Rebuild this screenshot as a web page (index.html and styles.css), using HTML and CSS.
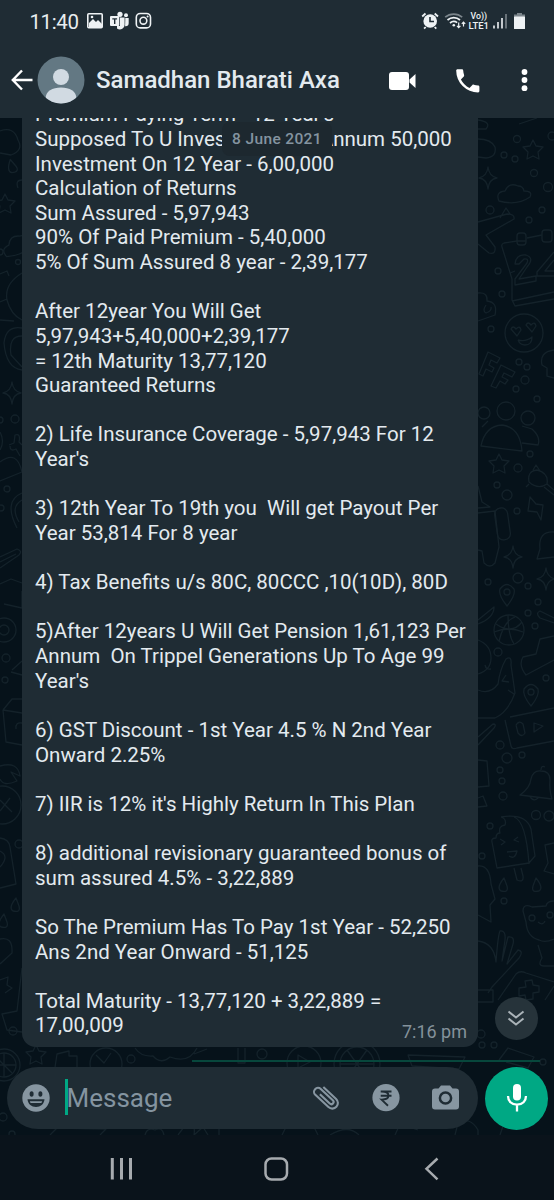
FILE: index.html
```html
<!DOCTYPE html>
<html lang="en">
<head>
<meta charset="utf-8">
<title>Samadhan Bharati Axa</title>
<link rel="stylesheet" href="styles.css">
</head>
<body>
<div class="phone">
  <header class="top">
    <div class="status">
      <span class="clock">11:40</span>
      <svg class="status-left" width="68" height="20" viewBox="86 10 68 20">
        <rect x="87.8" y="13.8" width="14.4" height="14" rx="1" fill="none" stroke="#eef2f4" stroke-width="1.6"/>
        <path d="M89 26v-3l4-4 3 3 2-2 4 4v3H89z" fill="#eef2f4"/><circle cx="92" cy="17" r="1.3" fill="#eef2f4"/>
        <g fill="#eef2f4"><circle cx="120" cy="14.3" r="2.6"/><circle cx="126" cy="15.3" r="2"/><path d="M120 17.5h4.6v6.5a4.8 4.8 0 0 1-7.6 4.5V26h3z"/><path d="M125.3 18h3.4v5a3.3 3.3 0 0 1-3.6 3.2z"/><rect x="110" y="16" width="9.3" height="10" rx="1"/></g>
        <path d="M112.3 18.9h4.8M114.7 18.9v5" stroke="#1f2c34" stroke-width="1.4"/>
        <rect x="136.3" y="13.5" width="14.2" height="14.4" rx="4" fill="none" stroke="#eef2f4" stroke-width="1.6"/>
        <circle cx="143.4" cy="20.7" r="3.4" fill="none" stroke="#eef2f4" stroke-width="1.6"/><circle cx="147.6" cy="16.4" r="1" fill="#eef2f4"/>
      </svg>
      <svg class="status-right" width="110" height="22" viewBox="418 9 110 22">
        <circle cx="430.2" cy="21" r="6.8" fill="#eef2f4"/>
        <path d="M422.2 16.5l3.3-3M438 16.5l-3.3-3M425.7 27l-1.6 1.7M434.7 27l1.6 1.7" stroke="#eef2f4" stroke-width="1.8"/>
        <path d="M430 17v4.5h4" stroke="#1f2c34" stroke-width="1.6" fill="none"/>
        <g fill="none" stroke-width="1.7"><path d="M445.2 17.2a13 13 0 0 1 17 0" stroke="#7b858b"/><path d="M447.5 20a9.5 9.5 0 0 1 12.5 0M450 23a6 6 0 0 1 7.2-.4" stroke="#eef2f4"/></g>
        <circle cx="453.8" cy="25.2" r="1.3" fill="#eef2f4"/>
        <path d="M458.7 22.5v5M457 25.8l1.7 1.8 1.7-1.8M463.5 26.6v-4.4M461.8 23.8l1.7-1.8 1.7 1.8" stroke="#eef2f4" stroke-width="1.2" fill="none"/>
        <text x="470.5" y="19.4" class="lte" textLength="16.5" lengthAdjust="spacingAndGlyphs">Vo))</text>
        <text x="468.5" y="28.6" class="lte" textLength="20.5" lengthAdjust="spacingAndGlyphs">LTE1</text>
        <path d="M494 28.5v-3M498 28.5v-6.5M502 28.5v-10.5" stroke="#eef2f4" stroke-width="1.6"/><path d="M506 28.5v-14.5" stroke="#7b858b" stroke-width="1.6"/>
        <rect x="517" y="13" width="5" height="2.5" fill="#7b858b"/><rect x="514" y="14.5" width="11" height="3" fill="#7b858b"/><rect x="514" y="16.5" width="11" height="12.6" rx=".6" fill="#eef2f4"/>
      </svg>
    </div>
    <div class="bar">
      <svg class="back" width="22" height="22" viewBox="0 0 22 22"><path d="M21.5 11H2.5M11 1.5L1.8 11l9.2 9.5" fill="none" stroke="#fff" stroke-width="2.4"/></svg>
      <svg class="avatar" width="48" height="48" viewBox="0 0 48 48"><defs><clipPath id="face"><circle cx="24" cy="24" r="23.5"/></clipPath></defs><circle cx="24" cy="24" r="23.5" fill="#637883"/><g clip-path="url(#face)" fill="#d1dae2"><circle cx="24" cy="21" r="8"/><path d="M8.5 43c0-8 7-11.5 15.500-11.500S39.500 35 39.500 43v5h-31z"/></g></svg>
      <h1 class="name">Samadhan Bharati Axa</h1>
      <svg class="actions" width="144" height="30" viewBox="386 65 144 30" fill="#fff">
        <rect x="389" y="72" width="20" height="18" rx="3"/><path d="M409.500 79.500l6-5.500v14l-6-5.500z"/>
        <path d="M457.500 69.300h4.300c.8 0 1.300.5 1.400 1.300.1 1.600.4 3.100.9 4.500.2.500 0 1-.3 1.400l-2.900 2.900a20 20 0 0 0 8.600 8.500l2.900-2.900c.4-.4.900-.5 1.400-.3 1.400.5 2.900.8 4.400.9.700 0 1.200.6 1.200 1.300v4.200c0 .8-.6 1.400-1.300 1.400A22 22 0 0 1 456.200 70.600c0-.7.6-1.300 1.300-1.300z"/>
        <circle cx="524.500" cy="72" r="2.900"/><circle cx="524.500" cy="80" r="2.900"/><circle cx="524.500" cy="88.200" r="2.900"/>
      </svg>
    </div>
  </header>

  <main class="chat">
    <svg class="wallpaper" width="554" height="1017" viewBox="0 118 554 1017">
      <defs>
        <path id="star" d="M0-10l3 6 7 1-5 5 1 7-6-3-6 3 1-7-5-5 7-1z"/>
        <path id="spark" d="M0-11q1 9 9 11q-8 1-9 11q-1-10-9-11q8-2 9-11z"/>
        <path id="cloud" d="M-15 8q-4-9 6-10q4-9 13-5q5 0 6 5q9 0 6 6q-13 9-31 4z"/>
        <path id="pin" d="M0 14q-9-11-7-17q7-9 14 0q2 6-7 17zM3 0a3 3 0 1 1-6 0a3 3 0 1 1 6 0"/>
        <path id="bell" d="M-16 8q10-7 11-16q2-9 10-8q9 0 9 9q-1 9 2 19zM-6 10q4 5 8 1M5-17q0-5 4-3"/>
        <path id="drop" d="M0-8q-8 10-3 13q8 2 6-5z"/>
        <g id="wheel"><circle r="16"/><circle r="12"/><path d="M0-12V12M-12 0H12M-8-8L8 8"/></g>
      </defs>
      <g class="doodles">
        <path d="M478 120q14 2 8 9h-8M519 124l18-6M478 139q13 0 17 8q2 10-9 11l-8-1"/>
        <circle cx="517" cy="139" r="3.500"/><circle cx="504" cy="155" r="3"/><circle cx="515" cy="159" r="3"/><circle cx="552" cy="136" r="4"/>
        <use href="#star" x="533" y="150"/><use href="#spark" x="488" y="178"/><circle cx="534" cy="173" r="3.500"/><circle cx="548" cy="187" r="4.500"/><use href="#cloud" x="514" y="193"/>
        <circle cx="490" cy="210" r="4"/><circle cx="542" cy="210" r="3"/><circle cx="529" cy="220" r="3"/>
        <path d="M478 222l29-8q8 0 7 5l-28 16l9 12q1 8-6 6l-11-9M500 218l6-10 4 6"/>
        <path d="M517 241l-13 2q-3 1-2 4l10 32v21l3 6 39-7M516 241h10M527 238l15-3M512 301l42-9M510 273l5-2"/><rect x="517" y="233" width="9" height="12" rx="3"/><rect x="542" y="230" width="10" height="12" rx="3"/>
        <path d="M515 264q1-10 11-9q9 3 1 12l-8 12 17-3v5l-21 4v-6l12-16q2-5-3-4l-5 5zM554 252l-17 20v4h17M554 260l-9 11h9"/>
        <circle cx="524" cy="333" r="19"/><path d="M517 336l-6-7q2-4 5 0q4-4 5 1zM532 332l-6-7q2-4 5 0q4-4 5 1zM518 340q8 2 14-3q0 8-7 8-5 0-7-5"/>
        <circle cx="498" cy="271" r="3"/><circle cx="502" cy="294" r="3"/><circle cx="491" cy="329" r="3"/><path d="M478 293q10-1 9 8q11 1 8 14l-17 6M486 305q-4 6 0 8q6-2 5-6"/>
        <path d="M488 352l12 6-3 5-6-3-2 5 5 3-2 4-6-3-3 7-4-2zM501 365l14 7-3 5-8-4-2 4 6 3-3 4-5-3-4 7-5-2z"/>
        <path d="M554 350q-15 2-12 15l5 3v8l7 2"/><circle cx="519" cy="362" r="3"/><circle cx="527" cy="367" r="3"/><circle cx="525" cy="380" r="4"/><circle cx="516" cy="389" r="3"/><circle cx="537" cy="399" r="3"/>
        <circle cx="484" cy="413" r="6"/><circle cx="506" cy="411" r="9"/><circle cx="528" cy="418" r="7"/><path d="M481 446q4-20 21-21 18 2 20 26zM522 426l10 3q9 8 6 16l-16-2M482 427l6-6"/>
        <use href="#star" x="499" y="464"/><circle cx="518" cy="468" r="4"/><circle cx="530" cy="454" r="3"/><circle cx="497" cy="485" r="3"/><circle cx="507" cy="495" r="5"/><circle cx="517" cy="511" r="3"/>
        <path d="M547 484q-9 6-18-2-2-11 8-12 12 3 10 14l7 6M544 487l10 8M533 470l3-5 4 6M529 484l-3 3M530 497l-2 14 9 1 4 8 2-15-7-1z"/>
        <rect x="496" y="508" width="13" height="32" rx="6" transform="rotate(-8 502 524)"/><path d="M478 513l17-2 4 36-4 16q-5 6-11 0l-2-12-4-1M478 486l4 16 8 5-12 1M554 532q-16-1-14 17l-3 10 17-2"/>
        <use href="#spark" x="513" y="557"/><use href="#spark" x="546" y="579"/><use href="#pin" x="507" y="592"/><circle cx="518" cy="578" r="5"/><circle cx="488" cy="582" r="3"/><circle cx="528" cy="586" r="3"/><circle cx="538" cy="602" r="3"/><circle cx="528" cy="613" r="3"/><circle cx="535" cy="626" r="3"/>
        <circle cx="509" cy="630" r="15"/><path d="M496 624q16 11 26-2M499 641q5-20 16-24M508 615q0 20 6 29M494 632q15-6 29 0M478 620l16-13q0 11-16 17M554 618l-14-7q-5 2 0 7l14 5"/>
        <path d="M478 640q13 5 13 18 0 12-13 16M478 690q12 5 20-6 2-15 8-25 6-4 5 6l4 28q-7 19-20 25h-17M554 660l-28 15q-8-10-3-18l13-3 4-15 14-3M485 665q1 5 6 4M506 675l-4 6 7 1M508 690l6 4"/>
        <circle cx="498" cy="652" r="4"/><circle cx="546" cy="678" r="3"/><use href="#pin" x="531" y="692"/><path d="M510 717l44-9M505 720l6 26q1 4 6 2l37-7M516 725l2 8q4 5 7 0l-2-9q-4-4-7 1M534 723v9l9-6z"/>
        <path d="M478 737l15-13q4 0 1 4l-16 17M478 760l9 1 2 25-11 1M478 798l5-2 4 10-9 1"/><circle cx="500" cy="745" r="4"/><circle cx="507" cy="758" r="5"/><circle cx="522" cy="755" r="3"/><circle cx="500" cy="770" r="3"/><circle cx="502" cy="781" r="3"/><circle cx="503" cy="796" r="4"/>
        <use href="#bell" x="536" y="787"/><circle cx="536" cy="815" r="4.500"/><circle cx="549" cy="816" r="5"/>
        <path d="M501 817q25-4 30 12l4 27-6 7-32 5-5-26q-1-4 4-4 0-5 4-5-2-7 5-8 2-6-4-8M514 817q12 4 15 47M514 868l3 12q7 3 6-4l-2-8M500 839l5 3-4 3M518 837l-4 3 5 2M507 852l10-1q-2 9-8 5"/>
        <circle cx="490" cy="826" r="3"/><circle cx="482" cy="856" r="3"/><use href="#drop" x="504" y="886"/><use href="#drop" x="536" y="886" transform="matrix(-1 0 0 1 1072 0)"/><circle cx="504" cy="901" r="3"/>
        <path d="M478 866q12-1 13 18l4 15-5 6 1 17-13-7M554 901q-7 0-8 5l-14 1q-9-4-9 4l3 11q1 15 13 18 6 3 15-1M538 945l4 13q-5 8 2 8h10"/><circle cx="532" cy="918" r="3"/><circle cx="550" cy="915" r="3"/><path d="M538 922q5 4 7-1M554 843l-9 2 3 18-4 8 10 3"/>
        <path d="M478 941q16 2 18 21 2-27 4-31 6-1 5 9l-3 21 6-24q7-1 5 7l-6 20 11-14q6 1 1 8l-27 29-4 6M478 990h15v12h-15M498 1000l18-26q4-4 10-1l28 9M519 988l7-1-1-6 7-1 1 5 6 1v6l-6 1v6l-7 1-1-5-6 1z"/>
        <circle cx="481" cy="1034" r="4"/><circle cx="494" cy="1045" r="3"/><circle cx="482" cy="1045" r="3"/><path d="M499 1060l9-12 26 9-6 11-22-6M545 1000l9-14"/><circle cx="543" cy="1062" r="3"/>

        <path d="M0 131q14-5 18 9 6 10-7 15l-11-2M22 180q-7 0-4 8"/><use href="#drop" x="13" y="167" transform="rotate(-20 13 167)"/><use href="#star" x="5" y="204"/><use href="#cloud" x="18" y="244" transform="rotate(-20 18 244)"/><circle cx="18" cy="262" r="2.500"/><circle cx="0" cy="252" r="3"/>
        <path d="M0 274l7-3 2 5M22 273q-18 11-15 27 4 15 15 20M0 302l7-3M0 320l14 1M22 328q-16-3-18 15 2 25 18 27M22 336q-14 0-11 19l11 12"/><use href="#spark" x="12" y="393"/><circle cx="15" cy="419" r="4"/><circle cx="0" cy="420" r="3"/><path d="M9 445l5-2 1-8q6-2 4 7l3 3M10 446q0 6 6 3l4 7M0 432q5 9 0 18M0 462q17-13 22 10l-22 9M22 493q-19 8-5 35M22 500q-12 7-3 22"/><circle cx="7" cy="489" r="3"/><circle cx="1" cy="508" r="3"/>
        <path d="M0 557l17-8q6 2 2 6l-19 13M0 562l16-8M0 584l11-5 11 4M22 591v17l-18-4"/><circle cx="4" cy="630" r="5"/><circle cx="4" cy="630" r="12"/><circle cx="6" cy="658" r="4"/><circle cx="5" cy="680" r="3"/><path d="M12 670l10-9M11 672l11 3M3 710l9-11h10M3 710l3 32 16 3M3 710l19 3M16 729q-1-7 6-6"/>
        <path d="M0 766q18-5 20 10l-9-4 6 9q-14 6-17-2"/><circle cx="2" cy="805" r="19"/><path d="M0 800l12 12M10 798L0 811M0 838q9 1 10 9l6 37-16 4M0 851q10 5 0 16"/><circle cx="19" cy="844" r="4"/><use href="#drop" x="16" y="906"/><use href="#drop" x="4" y="922"/><path d="M0 939q13-3 12 14l-12 11M22 968l-5 43-15 3 5 16 15 2M0 980l8-3-1 8 5 3-7 5"/><circle cx="13" cy="1031" r="4"/>
        <use href="#wheel" x="4" y="1065"/><use href="#star" x="36" y="1055"/><path d="M54 1074l3-20 12-3v5h8v18M135 1048q6 9 18 8 8 9 17 1 19 7 27-9M194 1054l13-5"/><circle cx="106" cy="1064" r="16"/><path d="M96 1055l8 8 7-10"/><circle cx="131" cy="1059" r="4"/><path d="M238 1048v15h7v-15"/><circle cx="262" cy="1054" r="5"/><circle cx="304" cy="1063" r="17"/><path d="M298 1055v13l12-6z"/><circle cx="357" cy="1064" r="23"/><circle cx="357" cy="1064" r="17"/><path d="M340 1064h34M347 1050l20 28M367 1050l-20 28M408 1055l57 2-6 12-47-3z"/>
        <circle cx="3" cy="1117" r="4"/><circle cx="12" cy="1134" r="3"/><path d="M50 1135l7-7 49 1-6 6M145 1135q2-8 10-5 7-4 9 5M178 1135l9-12q9-1 7 12l9-8 5 8M219 1135v-10M282 1135l4-8h28l4 8M330 1135q18-11 29 0M395 1135l5-11 18 6M455 1135l3-12q12-7 20 7v5M500 1135l4-12"/>
      </g>
    </svg>

    <div class="date">8 June 2021</div>

    <article class="bubble">
      <p class="text">Premium Paying Term - 12 Year's
Supposed To U Investment Per Annum 50,000
Investment On 12 Year - 6,00,000
Calculation of Returns
Sum Assured - 5,97,943
90% Of Paid Premium - 5,40,000
5% Of Sum Assured 8 year - 2,39,177

After 12year You Will Get
5,97,943+5,40,000+2,39,177
= 12th Maturity 13,77,120
Guaranteed Returns

2) Life Insurance Coverage - 5,97,943 For 12
Year's

3) 12th Year To 19th you  Will get Payout Per
Year 53,814 For 8 year

4) Tax Benefits u/s 80C, 80CCC ,10(10D), 80D

5)After 12years U Will Get Pension 1,61,123 Per
Annum  On Trippel Generations Up To Age 99
Year's

6) GST Discount - 1st Year 4.5 % N 2nd Year
Onward 2.25%

7) IIR is 12% it's Highly Return In This Plan

8) additional revisionary guaranteed bonus of
sum assured 4.5% - 3,22,889

So The Premium Has To Pay 1st Year - 52,250
Ans 2nd Year Onward - 51,125

Total Maturity - 13,77,120 + 3,22,889 =
17,00,009</p>
      <time class="time">7:16 pm</time>
    </article>

    <div class="jump"><svg width="20" height="20" viewBox="0 0 20 20"><path d="M2.500 3.500l7.500 6 7.500-6M2.500 10.500l7.500 6 7.500-6" fill="none" stroke="#aab3b8" stroke-width="2"/></svg></div>

    <div class="progress"></div>
    <footer class="composer">
      <div class="field">
        <svg class="smile" width="28" height="28" viewBox="0 0 28 28"><circle cx="14" cy="14" r="13.700" fill="#8796a1"/><g fill="#1f2c34"><ellipse cx="9.600" cy="10" rx="2" ry="2.800"/><ellipse cx="18.400" cy="10" rx="2" ry="2.800"/><path d="M5.500 15.300h17c-.5 5-4 7.700-8.500 7.700s-8-2.700-8.500-7.700z"/></g><path d="M7.800 17.200h12.400l-.8 1.800H8.600z" fill="#8796a1"/></svg>
        <span class="caret"></span>
        <span class="placeholder">Message</span>
        <svg class="tools" width="150" height="32" viewBox="310 1082 150 32">
          <path transform="translate(326.300 1097.700) rotate(-47)" d="M5.800-9.500V8a5.600 5.600 0 0 1-11.200 0V-10a4 4 0 0 1 8 0V6.500a2.200 2.200 0 0 1-4.500 0V-7" fill="none" stroke="#8796a1" stroke-width="2.100"/>
          <circle cx="386" cy="1097.700" r="13.600" fill="#8796a1"/><path d="M380.700 1091.500h10.800M380.700 1095.700h10.800M381.500 1091.500q7 0 7 4.100t-7 4l6.500 6.200" fill="none" stroke="#1f2c34" stroke-width="1.900"/>
          <path d="M435 1088.500h3.500l2.500-3h9l2.500 3h3.500q3 0 3 3v15q0 3-3 3h-21q-3 0-3-3v-15q0-3 3-3z" fill="#8796a1"/><circle cx="445.500" cy="1098" r="5.600" fill="none" stroke="#1f2c34" stroke-width="2.500"/>
        </svg>
      </div>
      <div class="mic"><svg width="22" height="30" viewBox="0 0 22 30"><rect x="7" y="1" width="8" height="16.500" rx="4" fill="#fff"/><path d="M2 13c0 5 3.500 8.700 9 8.700s9-3.700 9-8.700M11 21.500V28.500" fill="none" stroke="#fff" stroke-width="2.300"/></svg></div>
    </footer>
  </main>

  <nav class="nav">
    <svg width="554" height="65" viewBox="0 1135 554 65" fill="none" stroke="#a7abaf" stroke-width="2.500"><path d="M112.300 1158v21.500M121.500 1158v21.500M130.500 1158v21.500" stroke-width="3"/><rect x="265.500" y="1158.500" width="21.500" height="21" rx="6"/><path d="M437.500 1158.500l-11 10.300 11 10.500"/></svg>
  </nav>
</div>
</body>
</html>
```
FILE: styles.css
```css
* { box-sizing: border-box; }
body { margin: 0; background: #0a131b; font-family: Roboto, "Liberation Sans", sans-serif; }
svg { display: block; flex: none; }
.phone { width: 554px; height: 1200px; display: flex; flex-direction: column; overflow: hidden; }
.top { height: 118px; flex: none; background: #1f2c34; }
.status { height: 42px; padding: 0 26px 0 29.500px; display: flex; align-items: center; }
.clock { width: 56.500px; font-size: 20.500px; line-height: 42px; color: #e9edef; letter-spacing: -.4px; padding-top: 2px; }
.status-left { margin-top: -2px; }
.status-right { margin-left: auto; margin-top: -2px; }
.lte { font: 500 9.500px Roboto, sans-serif; fill: #eef2f4; }
.bar { height: 76px; padding: 0 24px 0 11px; display: flex; align-items: center; }
.avatar { margin-left: 4px; }
.name { margin: 0 0 0 11px; flex: 1; font-size: 24px; font-weight: 500; color: #e3eaef; white-space: nowrap; }
.chat { position: relative; height: 1017px; flex: none; display: flex; flex-direction: column; justify-content: flex-end; overflow: hidden; background: #06121a; }
.wallpaper { position: absolute; left: 0; top: 0; }
.doodles { fill: none; stroke: #14222a; stroke-width: 1.300; stroke-linejoin: round; }
.date { position: absolute; z-index: 2; left: 222px; top: 4px; width: 110px; height: 34px; border-radius: 8px; background: #1d282f; color: #8494a0; font-size: 15.500px; font-weight: 500; line-height: 34px; text-align: center; letter-spacing: .35px; }
.bubble { position: relative; flex: none; width: 456px; margin-left: 22px; padding: 9px 0 9px 13px; border-radius: 14px; background: #1f2c34; }
.text { margin: 0; white-space: pre; font-size: 20.500px; line-height: 24.620px; color: #e3eaef; }
.time { position: absolute; right: 11px; bottom: 4px; font-size: 18px; line-height: 22px; color: #84929b; }
.jump { position: absolute; left: 494.500px; top: 878.500px; width: 43px; height: 43px; border-radius: 50%; background: #26333a; display: flex; align-items: center; justify-content: center; }
.progress { position: relative; flex: none; height: 1.500px; margin: 13px 14px 0.500px 192px; background: #07473c; }
.composer { position: relative; height: 73px; flex: none; padding: 5px 6px 6px 7px; display: flex; justify-content: space-between; align-items: center; }
.field { width: 471px; height: 62px; border-radius: 31px; background: #1f2c34; padding: 0 18px 0 15px; display: flex; align-items: center; }
.caret { width: 2.500px; height: 36px; margin: 0 0 3px 15px; background: #00a884; }
.placeholder { flex: 1; margin-left: -1px; font-size: 26px; line-height: 36px; color: #8494a0; }
.mic { width: 63px; height: 63px; border-radius: 50%; background: #00a884; display: flex; align-items: center; justify-content: center; }
.nav { height: 65px; flex: none; background: #0a131b; }
```
